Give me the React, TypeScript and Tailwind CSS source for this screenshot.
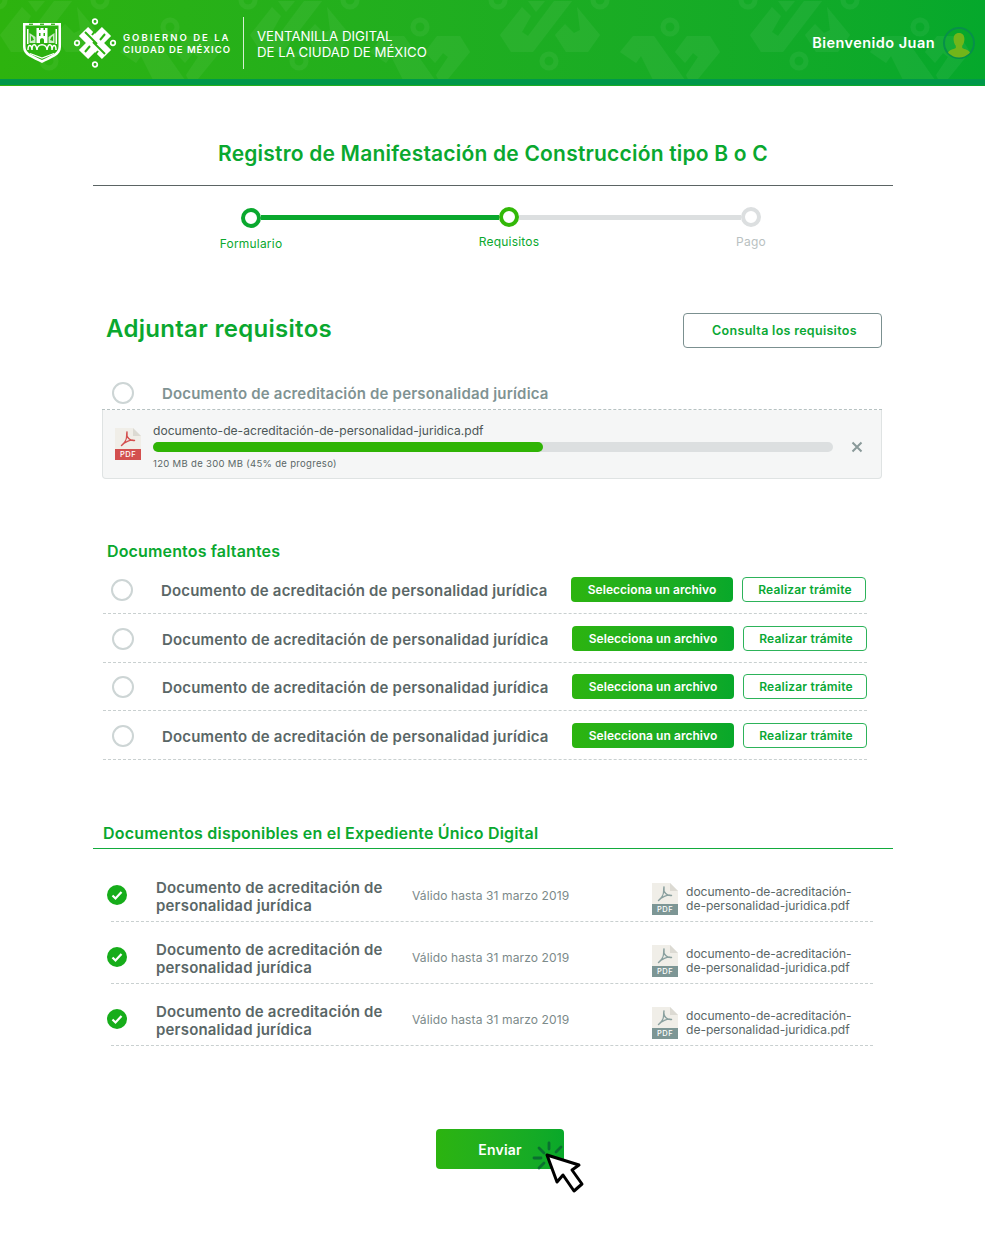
import React from 'react';

// Header pattern tile, repeated behind the logos
const HeaderPattern: React.FC = () => (
  <svg className="absolute left-0 top-0 w-full h-[80px]" aria-hidden="true">
    <defs>
      <pattern id="tile" x="0" y="0" width="250" height="120" patternUnits="userSpaceOnUse">
        <g fill="#ffffff" fillOpacity="0.05">
          <polygon points="0,35 22,7 31,16 22,32 28,36 54,1 72,1 33,52 11,52" />
          <polygon points="55,35 65,24 74,33 80,30 77,7 100,35 88,52 66,52" />
          <polygon points="28,1 45,1 36,12" />
          <polygon points="120,52 133,36 154,36 185,80 153,80 141,56 136,63" />
          <polygon points="175,52 187,36 210,36 220,52 198,79 188,79 186,75 198,57 193,53 185,63" />
        </g>
        <g fill="none" stroke="#ffffff" strokeOpacity="0.05" strokeWidth="5">
          <circle cx="170" cy="27" r="7" />
          <circle cx="49" cy="61" r="7" />
          <circle cx="-2" cy="0" r="7" />
          <circle cx="248" cy="0" r="7" />
          <circle cx="100" cy="0" r="7" />
        </g>
      </pattern>
    </defs>
    <rect width="100%" height="80" fill="url(#tile)" />
  </svg>
);

const ShieldLogo: React.FC = () => (
  <svg width="40" height="42" viewBox="0 0 40 42" className="shrink-0">
    <path d="M1 1h38v24c0 9-10 11-19 16C11 36 1 34 1 25Z" fill="#ffffff" />
    <path d="M3.500 3.500h33v21c0 7-8 9-16.500 13.500C11.500 33.500 3.500 31.500 3.500 24.500Z" fill="#2cb210" />
    <g fill="#2cb210">
      <rect x="7" y="1.600" width="4" height="1.300" />
      <rect x="18" y="1.600" width="4" height="1.300" />
      <rect x="29" y="1.600" width="4" height="1.300" />
    </g>
    <g fill="#ffffff">
      <path d="M14.500 6h2.500v2h1.500V6h3v2H23V6h2.500v15h-11Z" />
      <path d="M7.500 11l6 4v6h-6ZM32.500 11l-6 4v6h6Z" opacity="0.75" />
      <rect x="5" y="7" width="1.500" height="15" />
      <rect x="33.500" y="7" width="1.500" height="15" />
    </g>
    <g fill="#2cb210">
      <rect x="17" y="11" width="1.500" height="3" />
      <rect x="21.500" y="11" width="1.500" height="3" />
      <path d="M18 21v-3c0-2.500 4-2.500 4 0v3Z" />
      <path d="M9 14l1.500 1 1.500 3-3 1ZM31 14l-1.500 1-1.500 3 3 1Z" />
    </g>
    <path d="M6 28c0-6 3.500-6 4 0M10 28c0-7 4-7 5 0M15 28c0-7 10-7 10 0M25 28c1-7 5-7 5 0M30 28c.5-6 4-6 4 0" fill="none" stroke="#ffffff" strokeWidth="1.500" />
    <path d="M8 31.500l12 4.500 12-4.500" fill="none" stroke="#ffffff" strokeWidth="1.300" />
  </svg>
);

const CdmxLogo: React.FC = () => (
  <svg width="46" height="50" viewBox="-23 -25 46 50" className="shrink-0">
    <g fill="none" stroke="#ffffff" strokeWidth="1.700">
      <circle cx="0" cy="-21.500" r="2.300" />
      <circle cx="0" cy="21.500" r="2.300" />
      <circle cx="-18" cy="0" r="2.300" />
      <circle cx="18" cy="0" r="2.300" />
    </g>
    <g fill="none" stroke="#ffffff" strokeWidth="13">
      <path d="M-11.500 -11.500 L11.500 11.500" />
      <path d="M11.500 -11.500 L-11.500 11.500" />
    </g>
    <g fill="none" stroke="#2bb110" strokeWidth="2">
      <path d="M-10 -11 L2 1" />
      <path d="M10 11 L-2 -1" />
      <path d="M4 -17 L-3 -8" />
      <path d="M-4 17 L3 8" />
      <path d="M10 -9 L5 -3" />
      <path d="M-10 9 L-5 3" />
    </g>
  </svg>
);

const Avatar: React.FC = () => (
  <svg width="32" height="32" viewBox="0 0 32 32" className="shrink-0">
    <clipPath id="avatar-clip">
      <circle cx="16" cy="16" r="14.500" />
    </clipPath>
    <circle cx="16" cy="16" r="15" fill="none" stroke="#07904a" strokeWidth="2" />
    <g clipPath="url(#avatar-clip)">
      <path d="M16 6c4 0 5.600 3 5.400 6.500-.1 2.500-.8 4.800-2.200 6.300v2.200c2.500 1.300 6.800 2 7.800 4.500v6.500H5V25.500c1-2.500 5.300-3.200 7.800-4.500v-2.200c-1.400-1.500-2.100-3.800-2.200-6.300C10.400 9 12 6 16 6Z" fill="#72b51a" />
    </g>
  </svg>
);

interface PdfIconProps {
  band: string;
  mark: string;
}

const PdfIcon: React.FC<PdfIconProps> = ({ band, mark }) => (
  <svg width="26" height="32" viewBox="0 0 26 32" className="shrink-0">
    <path d="M0 0h18l8 8v24H0Z" fill="#f0eee8" />
    <path d="M18 0l8 8h-8Z" fill="#dcdad3" />
    <path d="M0 21h26v11H0Z" fill={band} />
    <path d="M12 4c-1 4 1.500 8-5.500 13.500 2.500-3 9-6.500 13-5-4.500.5-8.500-3-7.500-8.500Z" fill="none" stroke={mark} strokeWidth="1.400" strokeLinejoin="round" />
    <text x="13" y="29.300" textAnchor="middle" fontSize="7.500" fontFamily="Inter, sans-serif" fontWeight="500" letterSpacing="0.5" fill="#ffffff">
      PDF
    </text>
  </svg>
);

const EmptyCircle: React.FC = () => (
  <span className="block w-[22px] h-[22px] shrink-0 rounded-full border-2 border-[#cdd5d5] bg-white" />
);

const CheckCircle: React.FC = () => (
  <svg width="20" height="20" viewBox="0 0 20 20" className="shrink-0 ml-[-4px]">
    <circle cx="10" cy="10" r="10" fill="#16ad1a" />
    <path d="M5.500 10.500l3 3 6-6.500" fill="none" stroke="#ffffff" strokeWidth="2.200" />
  </svg>
);

interface StepProps {
  label: string;
  ringClass: string;
  textClass: string;
  circleTop: string;
  labelTop: string;
}

const Step: React.FC<StepProps> = ({ label, ringClass, textClass, circleTop, labelTop }) => (
  <div className="w-20 flex flex-col items-center relative z-10">
    <span className={`block w-5 h-5 rounded-full border-[4px] bg-white ${ringClass} ${circleTop}`} />
    <span className={`text-[12px] leading-4 tracking-[0.2px] ${textClass} ${labelTop}`}>{label}</span>
  </div>
);

interface MissingRowProps {
  rowClass: string;
}

// rowClass carries the small offsets each row has in the layout
const MissingRow: React.FC<MissingRowProps> = ({ rowClass }) => (
  <div className="border-b border-dashed border-[#c9d0d0]">
    <div className={`flex items-center h-[25px] mb-[11px] ${rowClass}`}>
      <EmptyCircle />
      <span className="ml-[28px] mt-[4px] text-[15px] font-semibold tracking-[0.18px] text-[#5a6767] whitespace-nowrap">
        Documento de acreditación de personalidad jurídica
      </span>
      <button className="ml-auto w-[162px] h-[25px] rounded-sm bg-gradient-to-r from-[#2cb40f] to-[#08a82a] text-white text-[12px] font-semibold tracking-[0.05px]">
        Selecciona un archivo
      </button>
      <button className="ml-[9px] w-[124px] h-[25px] pl-[2px] rounded-sm border border-[#2db35a] bg-white text-[#0aa835] text-[12px] font-semibold tracking-[0.2px]">
        Realizar trámite
      </button>
    </div>
  </div>
);

interface AvailableRowProps {
  rowClass: string;
}

const AvailableRow: React.FC<AvailableRowProps> = ({ rowClass }) => (
  <div className={`flex items-center border-b border-dashed border-[#c9d0d0] ${rowClass}`}>
    <CheckCircle />
    <p className="ml-[29px] mt-[3px] w-[256px] text-[15px] leading-[18px] font-semibold tracking-[0.18px] text-[#5a6767]">
      Documento de acreditación de personalidad jurídica
    </p>
    <span className="w-[240px] mt-[2px] text-[12.050px] tracking-[0.1px] text-[#7c8a8a]">Válido hasta 31 marzo 2019</span>
    <div className="flex items-center mt-[8px]">
      <PdfIcon band="#7d9695" mark="#8aa09f" />
      <p className="ml-[8px] text-[12.050px] leading-[14px] text-[#5a6767]">
        documento-de-acreditación-
        <br />
        de-personalidad-juridica.pdf
      </p>
    </div>
  </div>
);

const ClickCursor: React.FC = () => (
  <svg width="60" height="62" viewBox="0 0 60 62" className="absolute left-[91px] top-[6px]">
    <g stroke="#0a6f30" strokeWidth="2.800" strokeLinecap="round" fill="none">
      <path d="M22 8v6" />
      <path d="M29 17l5-5" />
      <path d="M12 13l5 5" />
      <path d="M7 23h7" />
      <path d="M12 33l5-5" />
    </g>
    <path d="M20 20l10 27 6-7 11 16 8-7-10-14 7-5Z" fill="#ffffff" stroke="#000000" strokeWidth="3" strokeLinejoin="round" />
  </svg>
);

const App: React.FC = () => {
  return (
    <div className="w-full h-[1252px] overflow-hidden bg-white font-['Inter',sans-serif]">
      <header className="relative h-[86px] bg-gradient-to-r from-[#2db30e] to-[#05a82c]">
        <HeaderPattern />
        <div className="relative flex items-center h-[86px] pb-[1px] pl-[22px] pr-[10px]">
          <ShieldLogo />
          <div className="ml-[10px]">
            <CdmxLogo />
          </div>
          <div className="ml-[5px] mt-[3px] text-white text-[9.500px] leading-[12px] font-semibold tracking-[0.96px] whitespace-nowrap">
            <p className="tracking-[2px]">GOBIERNO DE LA</p>
            <p>CIUDAD DE MÉXICO</p>
          </div>
          <span className="block ml-[12px] w-px h-[52px] bg-white/80" />
          <div className="ml-[13px] mt-[2px] text-white text-[13.250px] leading-[16px] whitespace-nowrap">
            <p>VENTANILLA DIGITAL</p>
            <p>DE LA CIUDAD DE MÉXICO</p>
          </div>
          <span className="ml-auto text-white text-[14.500px] font-semibold tracking-[0.45px]">Bienvenido Juan</span>
          <div className="ml-[8px]">
            <Avatar />
          </div>
        </div>
        <div className="absolute left-0 right-0 top-[79px] h-[6px] bg-[#00984a]" />
      </header>

      <main className="w-[800px] ml-[93px]">
        <div className="h-[100px] pt-[37px] flex items-center justify-center border-b border-[#5b6464]">
          <h1 className="text-[21px] font-semibold tracking-[0.2px] text-[#0aa82f]">
            Registro de Manifestación de Construcción tipo B o C
          </h1>
        </div>

        <div className="flex items-start h-[44px] mt-[21px] ml-[118px]">
          <Step
            label="Formulario"
            ringClass="border-[#0aa82e]"
            textClass="text-[#0aa82e]"
            circleTop="mt-[1px]"
            labelTop="mt-[8px]"
          />
          <span className="block w-[238px] h-[5px] mt-[8px] -mx-[30px] bg-[#0aa82e]" />
          <Step
            label="Requisitos"
            ringClass="border-[#32b808]"
            textClass="text-[#0aa82e]"
            circleTop="mt-0"
            labelTop="mt-[7px]"
          />
          <span className="block w-[222px] h-[5px] mt-[8px] -mx-[30px] bg-[#dcdfe0]" />
          <Step
            label="Pago"
            ringClass="border-[#dcdfe0]"
            textClass="text-[#b9c1c1]"
            circleTop="mt-0"
            labelTop="mt-[7px]"
          />
        </div>

        <div className="flex items-center justify-between h-[35px] mt-[62px] pl-[13px] pr-[11px]">
          <h2 className="text-[24px] mb-[4px] font-semibold tracking-[0.3px] text-[#0aa82f]">Adjuntar requisitos</h2>
          <button className="w-[199px] h-[35px] pt-[1px] pl-[4px] rounded-sm border border-[#7b9090] bg-white text-[12.500px] font-semibold tracking-[0.3px] text-[#0aa835]">
            Consulta los requisitos
          </button>
        </div>

        <div className="flex items-center h-[22px] mt-[34px] ml-[19px]">
          <EmptyCircle />
          <span className="ml-[28px] mt-[2px] text-[15px] font-semibold tracking-[0.18px] text-[#7f9393] whitespace-nowrap">
            Documento de acreditación de personalidad jurídica
          </span>
        </div>

        <div className="w-[780px] ml-[9px] mt-[5px]">
          <div className="border-t border-dashed border-[#b7c2c2]" />
          <div className="flex items-center h-[69px] pl-[12px] border border-t-0 border-[#dfe3e3] rounded-b-sm bg-[#f5f6f6]">
            <div className="mt-[-1px]">
              <PdfIcon band="#d3504f" mark="#d3504f" />
            </div>
            <div className="ml-[12px] w-[680px] mt-[5px]">
              <p className="text-[12.100px] leading-[16px] text-[#4c5757]">
                documento-de-acreditación-de-personalidad-juridica.pdf
              </p>
              <div className="mt-[3px] h-[10px] rounded-full bg-[#dcdfe0]">
                <div className="h-[10px] w-[390px] rounded-full bg-[#2fb405]" />
              </div>
              <p className="mt-[6px] text-[9.500px] leading-[12px] tracking-[0.32px] text-[#5a6767]">
                120 MB de 300 MB (45% de progreso)
              </p>
            </div>
            <svg width="12" height="12" viewBox="0 0 12 12" className="ml-[18px] mt-[6px]">
              <path d="M1.500 1.500l9 9M10.500 1.500l-9 9" stroke="#8a9a9a" strokeWidth="2" />
            </svg>
          </div>
        </div>

        <h3 className="mt-[61px] ml-[14px] text-[16px] leading-[22px] font-semibold tracking-[0.15px] text-[#0aa82f]">
          Documentos faltantes
        </h3>
        <div className="ml-[10px] w-[764px]">
          <MissingRow rowClass="mt-[15px] pl-[8px] pr-[1px]" />
          <div className="h-[12px]" />
          <MissingRow rowClass="pl-[9px]" />
          <div className="h-[11px]" />
          <MissingRow rowClass="pl-[9px]" />
          <div className="h-[12px]" />
          <MissingRow rowClass="pl-[9px]" />
        </div>

        <div className="mt-[62px] h-[27px] pl-[10px] border-b border-[#12ab3c]">
          <h3 className="text-[16px] leading-[22px] font-semibold tracking-[0.2px] text-[#0aa82f]">
            Documentos disponibles en el Expediente Único Digital
          </h3>
        </div>
        <div className="ml-[18px] w-[762px]">
          <AvailableRow rowClass="h-[73px] pt-[20px]" />
          <AvailableRow rowClass="h-[62px] pt-[9px]" />
          <AvailableRow rowClass="h-[62px] pt-[9px]" />
        </div>

        <div className="relative w-[128px] h-[40px] mt-[83px] ml-[343px]">
          <button className="w-full h-full rounded-sm bg-gradient-to-r from-[#2cb40f] to-[#08a82a] text-white text-[14px] font-semibold tracking-[0.2px]">
            Enviar
          </button>
          <ClickCursor />
        </div>
      </main>
    </div>
  );
};

export default App;
